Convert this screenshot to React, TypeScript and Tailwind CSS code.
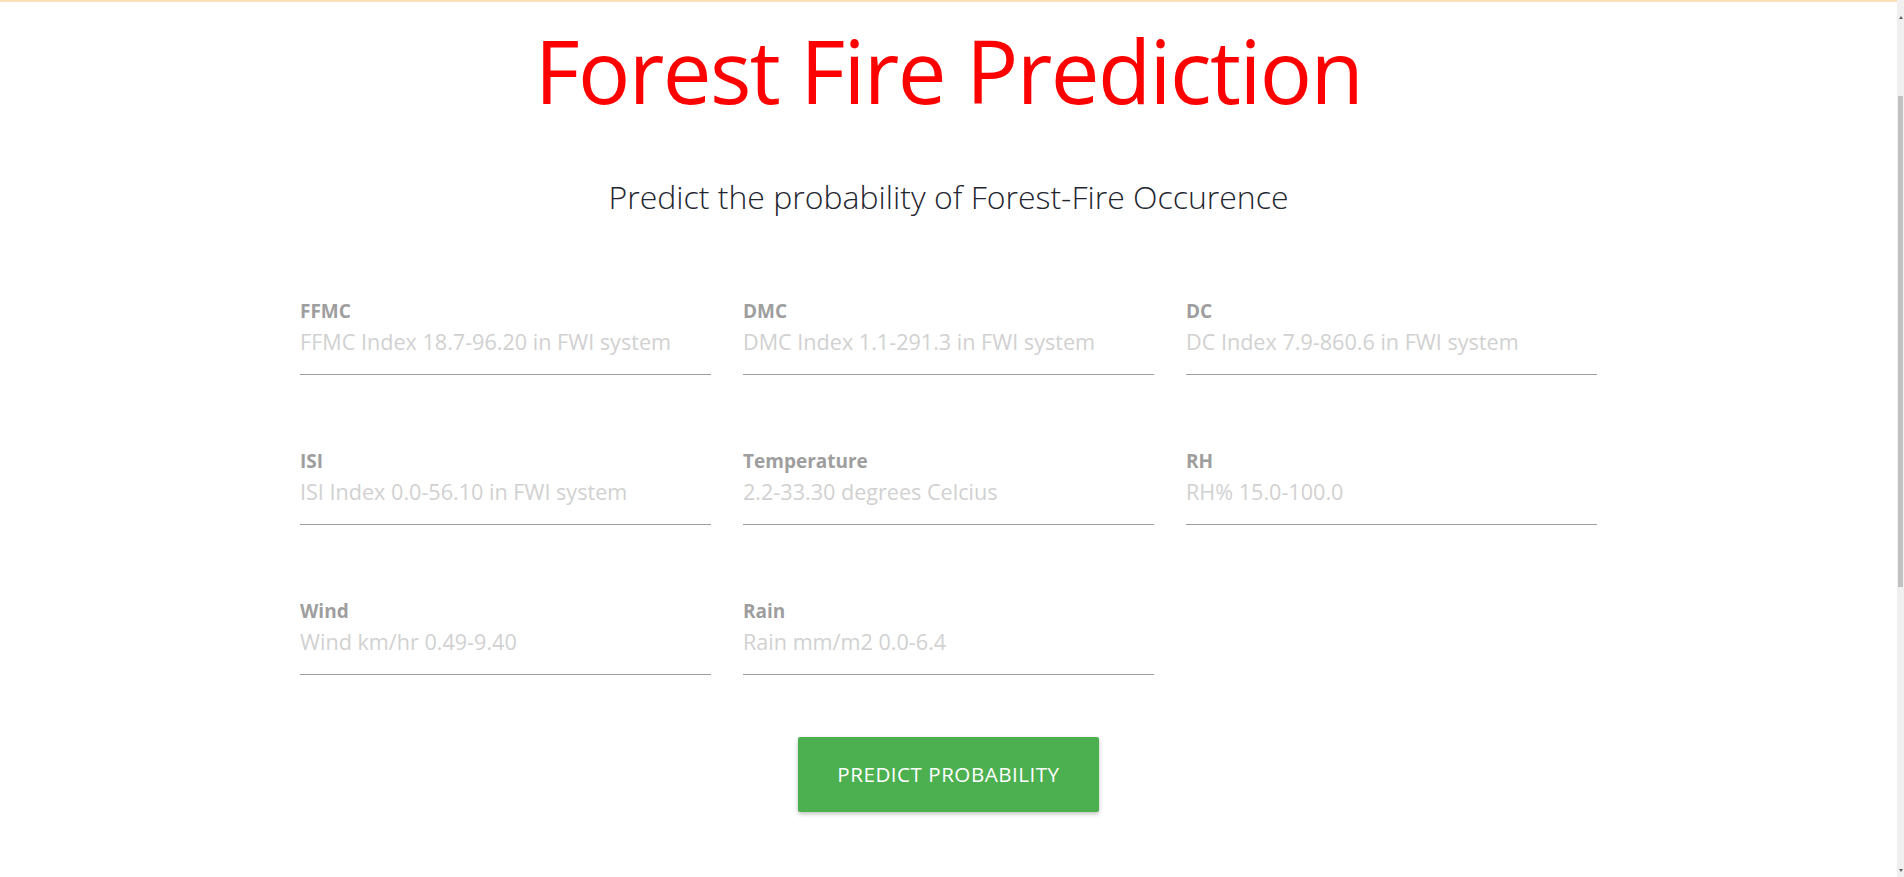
import React from "react";

const fields = [
  { label: "FFMC", ph: "FFMC Index 18.7-96.20 in FWI system" },
  { label: "DMC", ph: "DMC Index 1.1-291.3 in FWI system" },
  { label: "DC", ph: "DC Index 7.9-860.6 in FWI system" },
  { label: "ISI", ph: "ISI Index 0.0-56.10 in FWI system" },
  { label: "Temperature", ph: "2.2-33.30 degrees Celcius" },
  { label: "RH", ph: "RH% 15.0-100.0" },
  { label: "Wind", ph: "Wind km/hr 0.49-9.40" },
  { label: "Rain", ph: "Rain mm/m2 0.0-6.4" },
];

export default function App() {
  return (
    <div className="flex h-[877px] w-full overflow-hidden bg-white" style={{ fontFamily: '"Open Sans", "Noto Sans", sans-serif' }}>
      <main className="flex-1 border-t-2 border-[#fce1b8] flex flex-col items-center">
        <h1 className="mt-[16px] h-[104px] text-[87px] leading-[104px] tracking-[-1.6px] font-normal text-[#ff0000] whitespace-nowrap">
          Forest Fire Prediction
        </h1>
        <h2 className="mt-[56px] h-[38px] text-[32px] leading-[38px] font-light text-[#1f2630] whitespace-nowrap">
          Predict the probability of Forest-Fire Occurence
        </h2>
        <form className="mt-[83px] w-[1297px] grid grid-cols-3 gap-x-8 gap-y-[74px]">
          {fields.map((f) => (
            <div key={f.label} className="flex flex-col">
              <label className="h-[24px] text-[19px] leading-[24px] font-bold text-[#9e9e9e]">{f.label}</label>
              <input
                type="text"
                placeholder={f.ph}
                className="mt-[4px] h-[48px] w-full border-b border-[#9e9e9e] text-[21.6px] leading-[29px] pb-[18px] outline-none placeholder:text-[#d1d1d1] bg-transparent"
              />
            </div>
          ))}
        </form>
        <button className="mt-[62px] w-[301px] h-[75px] shrink-0 rounded-[2px] bg-[#4caf50] text-white text-[20.6px] tracking-[0.5px] uppercase shadow-[0_2px_4px_rgba(0,0,0,0.25)]">
          Predict Probability
        </button>
      </main>
      <div className="w-[7px] bg-[#f0f0f0] flex flex-col items-center">
        <div className="mt-[16px] w-0 h-0 border-l-[2px] border-r-[2px] border-b-[3px] border-l-transparent border-r-transparent border-b-[#606060]" />
        <div className="mt-[77px] w-[5px] h-[491px] bg-[#c1c1c1]" />
        <div className="mt-auto mb-[5px] w-0 h-0 border-l-[2px] border-r-[2px] border-t-[3px] border-l-transparent border-r-transparent border-t-[#606060]" />
      </div>
    </div>
  );
}
